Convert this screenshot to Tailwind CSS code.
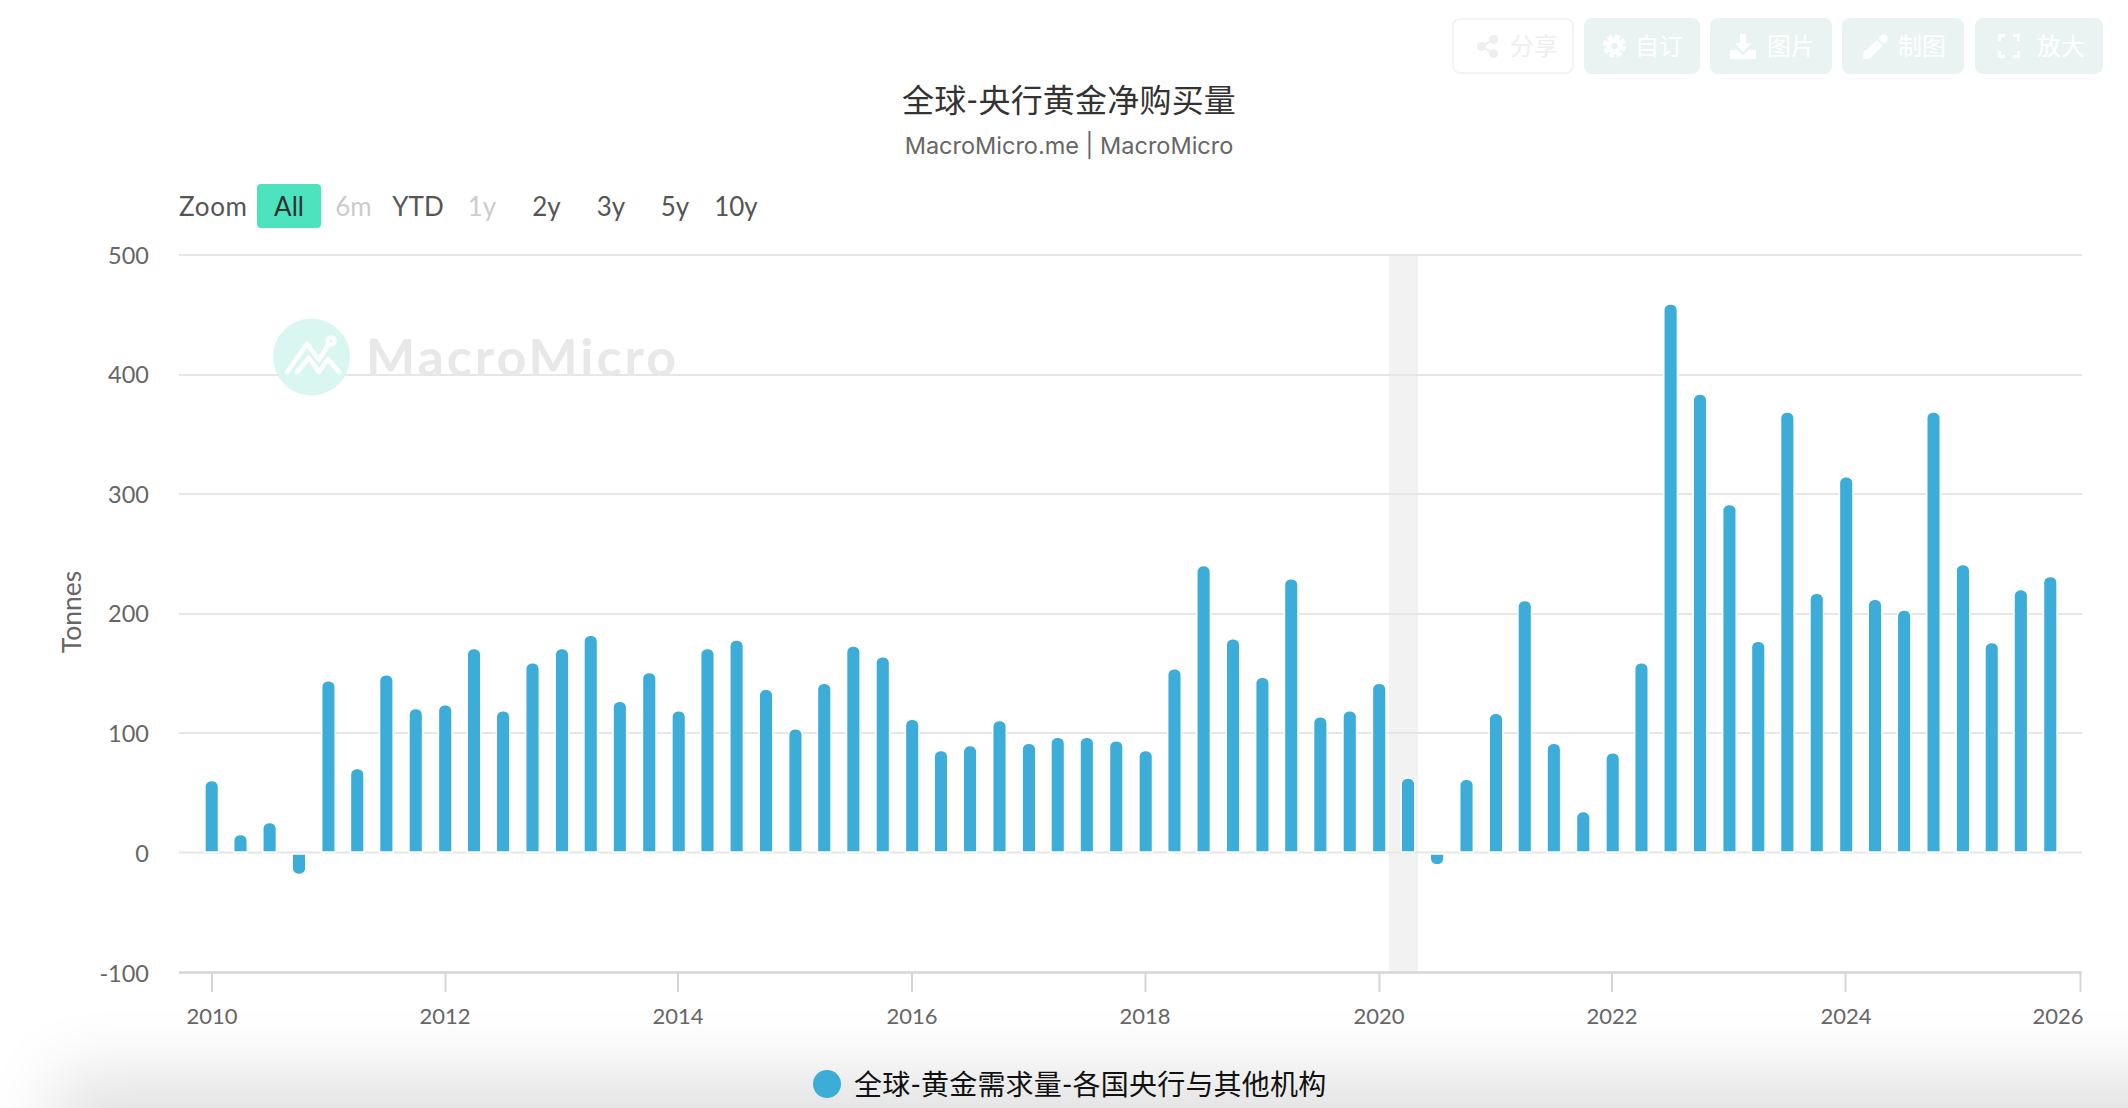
<!DOCTYPE html>
<html lang="zh-CN">
<head>
    <meta charset="UTF-8">
    <title>全球-央行黄金净购买量</title>
    <script src="https://cdn.jsdelivr.net/npm/@tailwindcss/browser@4"></script>
</head>
<body>
    <div class="relative w-[2128px] h-[1108px] overflow-hidden bg-white font-['Lato','Noto_Sans_CJK_SC',sans-serif]">

        <!-- bottom shadow of the card -->
        <div class="absolute left-[110px] top-[1128px] w-[2300px] h-[100px] bg-[#e2e2e2] shadow-[0_0_70px_55px_#e2e2e2]"></div>

        <div class="relative">
            <!-- toolbar -->
            <div class="flex pt-[18px] pl-[1452px] h-[74px] text-[24px] text-white">
                <div class="flex items-center w-[122px] h-[56px] pl-[23px] gap-[12px] bg-white border-2 border-[#f3f3f3] rounded-lg text-[#eeeeee]">
                    <svg class="w-[21px] h-[23px]" viewBox="0 0 21 23" fill="#eeeeee"><circle cx="4.5" cy="11.5" r="4.5"/><circle cx="16.5" cy="4.5" r="4.5"/><circle cx="16.5" cy="18.5" r="4.5"/><path d="M4.5 11.5 16.5 4.5M4.5 11.5l12 7" stroke="#eeeeee" stroke-width="2.5"/></svg>
                    <span>分享</span>
                </div>
                <div class="flex items-center w-[116px] h-[56px] ml-[10px] pl-[19px] gap-[9px] bg-[#e9f4f2] rounded-lg">
                    <svg class="w-[23px] h-[24px]" viewBox="0 0 24 24" fill="none" stroke="#ffffff"><circle cx="12" cy="12" r="6" stroke-width="5"/><circle cx="12" cy="12" r="9.5" stroke-width="5" stroke-dasharray="5 2.46"/></svg>
                    <span>自订</span>
                </div>
                <div class="flex items-center w-[122px] h-[56px] ml-[10px] pl-[20px] gap-[11px] bg-[#e9f4f2] rounded-lg">
                    <svg class="w-[26px] h-[25px]" viewBox="0 0 26 25" fill="#ffffff"><path d="M10 0h6v9h5l-8 9-8-9h5z"/><path d="M0 16h7l6 5 6-5h7v9H0z"/></svg>
                    <span>图片</span>
                </div>
                <div class="flex items-center w-[122px] h-[56px] ml-[10px] pl-[21px] gap-[10px] bg-[#e9f4f2] rounded-lg">
                    <svg class="w-[25px] h-[25px]" viewBox="0 0 25 25" fill="#ffffff"><path d="M17 2.5c2-2.500 5-2.500 6.500-.5s1.500 4-.5 6L21 10 15.500 4.500zM14 6l5.500 5.500L7 24.500 0 25l.5-7z"/></svg>
                    <span>制图</span>
                </div>
                <div class="flex items-center w-[128px] h-[56px] ml-[11px] pl-[23px] gap-[17px] bg-[#e9f4f2] rounded-lg">
                    <svg class="w-[22px] h-[24px]" viewBox="0 0 22 24" fill="none" stroke="#ffffff" stroke-width="3"><path d="M7 1.500H1.500V7M15 1.500h5.500V7M7 22.500H1.500V17M15 22.500h5.500V17"/></svg>
                    <span>放大</span>
                </div>
            </div>

            <!-- titles -->
            <div class="mt-[6px] h-[40px] pl-[10px] text-center text-[32px] tracking-[0.2px] leading-[40px] text-[#333333]">全球-央行黄金净购买量</div>
            <div class="mt-[10px] h-[32px] pl-[10px] text-center text-[23.5px] leading-[32px] text-[#666666] font-['Inter','Noto_Sans_CJK_SC',sans-serif]">MacroMicro.me | MacroMicro</div>

            <!-- range selector -->
            <div class="flex items-center mt-[22px] ml-[179px] h-[44px] text-[26px] text-[#555555]">
                <span class="w-[78px] tracking-[0.7px]">Zoom</span>
                <span class="flex items-center justify-center w-[64px] h-[44px] rounded bg-[#4de3bf] text-[#333333]">All</span>
                <span class="w-[65px] text-center text-[#cccccc]">6m</span>
                <span class="w-[64px] text-center">YTD</span>
                <span class="w-[64px] text-center text-[#cccccc]">1y</span>
                <span class="w-[65px] text-center">2y</span>
                <span class="w-[64px] text-center">3y</span>
                <span class="w-[64px] text-center">5y</span>
                <span class="w-[58px] text-center">10y</span>
            </div>

            <!-- chart -->
            <svg id="chart" class="block mt-[12px]" width="2128" height="800" viewBox="0 240 2128 800">
                <rect x="1389" y="255" width="29" height="717" fill="#f2f2f2"/>
                <g stroke="#e6e6e6" stroke-width="2">
                    <path d="M179 255H2082M179 375H2082M179 494H2082M179 614H2082M179 733H2082M179 852.500H2082"/>
                </g>
                <!-- watermark -->
                <circle cx="311.500" cy="357" r="38.500" fill="#d9f7f0"/>
                <g fill="none" stroke="#ffffff" stroke-width="4.500" stroke-linejoin="round" stroke-linecap="round">
                    <path d="M287 372l20-28 12 16 9-15"/>
                    <path d="M297 372l12-14 10 14 9-13 11 13"/>
                    <circle cx="331" cy="341" r="3.500"/>
                </g>
                <text x="366" y="376" class="text-[52px] font-bold fill-[#e8e8e8]" textLength="310">MacroMicro</text>

                <g id="bars"></g>

                <path d="M179 972.500H2082" stroke="#d6d6d6" stroke-width="2.500"/>
                <path d="M212 972v20M445.500 972v20M678 972v20M912 972v20M1145.500 972v20M1379.500 972v20M1612 972v20M1845.500 972v20M2080.500 972v20" stroke="#d6d6d6" stroke-width="2"/>

                <g class="text-[23.5px] fill-[#666666]" text-anchor="end">
                    <text x="149" y="264">500</text>
                    <text x="149" y="383">400</text>
                    <text x="149" y="503">300</text>
                    <text x="149" y="622">200</text>
                    <text x="149" y="742">100</text>
                    <text x="149" y="862">0</text>
                    <text x="149" y="982">-100</text>
                </g>
                <g class="text-[22px] fill-[#666666]" text-anchor="middle">
                    <text x="212" y="1024">2010</text>
                    <text x="445" y="1024">2012</text>
                    <text x="678" y="1024">2014</text>
                    <text x="912" y="1024">2016</text>
                    <text x="1145" y="1024">2018</text>
                    <text x="1379" y="1024">2020</text>
                    <text x="1612" y="1024">2022</text>
                    <text x="1846" y="1024">2024</text>
                    <text x="2058" y="1024">2026</text>
                </g>
                <text x="81" y="612" class="text-[26.500px] fill-[#666666]" text-anchor="middle" transform="rotate(-90 81 612)">Tonnes</text>
            </svg>

            <!-- legend -->
            <div class="flex items-center mt-[24px] ml-[813px] h-[40px] gap-[13px] text-[28px] tracking-[0.2px] text-[#111111]">
                <span class="w-[28px] h-[28px] rounded-full bg-[#3cadd9]"></span>
                <span>全球-黄金需求量-各国央行与其他机构</span>
            </div>
        </div>
    </div>

    <script>
        // quarterly values, 2010 Q1 to 2025 Q4
        var values = [59, 14, 24, -17, 142, 69, 147, 119, 122, 169, 117, 157, 169, 180, 125, 149,
            117, 169, 176, 135, 102, 140, 171, 162, 110, 84, 88, 109, 90, 95, 95, 92,
            84, 152, 238, 177, 145, 227, 112, 117, 140, 61, -9, 60, 115, 209, 90, 33,
            82, 157, 456, 381, 289, 175, 366, 215, 312, 210, 201, 366, 239, 174, 218, 229];
        var quarterDays = [0, 90, 181, 273];
        var zeroY = 852, perUnit = 1.2, halfW = 6.8, r = 6;
        var bars = document.getElementById("bars");

        values.forEach(function (v, i) {
            var t = Math.floor(i / 4) * 365 + quarterDays[i % 4];
            var x = 211.7 + t / (16 * 365) * 1868;
            var d;
            if (v >= 0) {
                var top = zeroY - v * perUnit - 0.8;
                if (top + r > zeroY) top = zeroY - r;
                d = "M" + (x - halfW) + " " + zeroY + "V" + (top + r) + "A" + r + " " + r + " 0 0 1 " + (x - halfW + r) + " " + top
                    + "H" + (x + halfW - r) + "A" + r + " " + r + " 0 0 1 " + (x + halfW) + " " + (top + r) + "V" + zeroY + "Z";
            } else {
                var bottom = zeroY + 2 - v * perUnit;
                d = "M" + (x - halfW) + " " + (zeroY + 2) + "V" + (bottom - r) + "A" + r + " " + r + " 0 0 0 " + (x - halfW + r) + " " + bottom
                    + "H" + (x + halfW - r) + "A" + r + " " + r + " 0 0 0 " + (x + halfW) + " " + (bottom - r) + "V" + (zeroY + 2) + "Z";
            }
            var bar = document.createElementNS("http://www.w3.org/2000/svg", "path");
            bar.setAttribute("d", d);
            bar.setAttribute("fill", "#3cadd9");
            bar.setAttribute("stroke", "#ffffff");
            bar.setAttribute("stroke-width", "1.500");
            bars.appendChild(bar);
        });
    </script>
</body>
</html>
